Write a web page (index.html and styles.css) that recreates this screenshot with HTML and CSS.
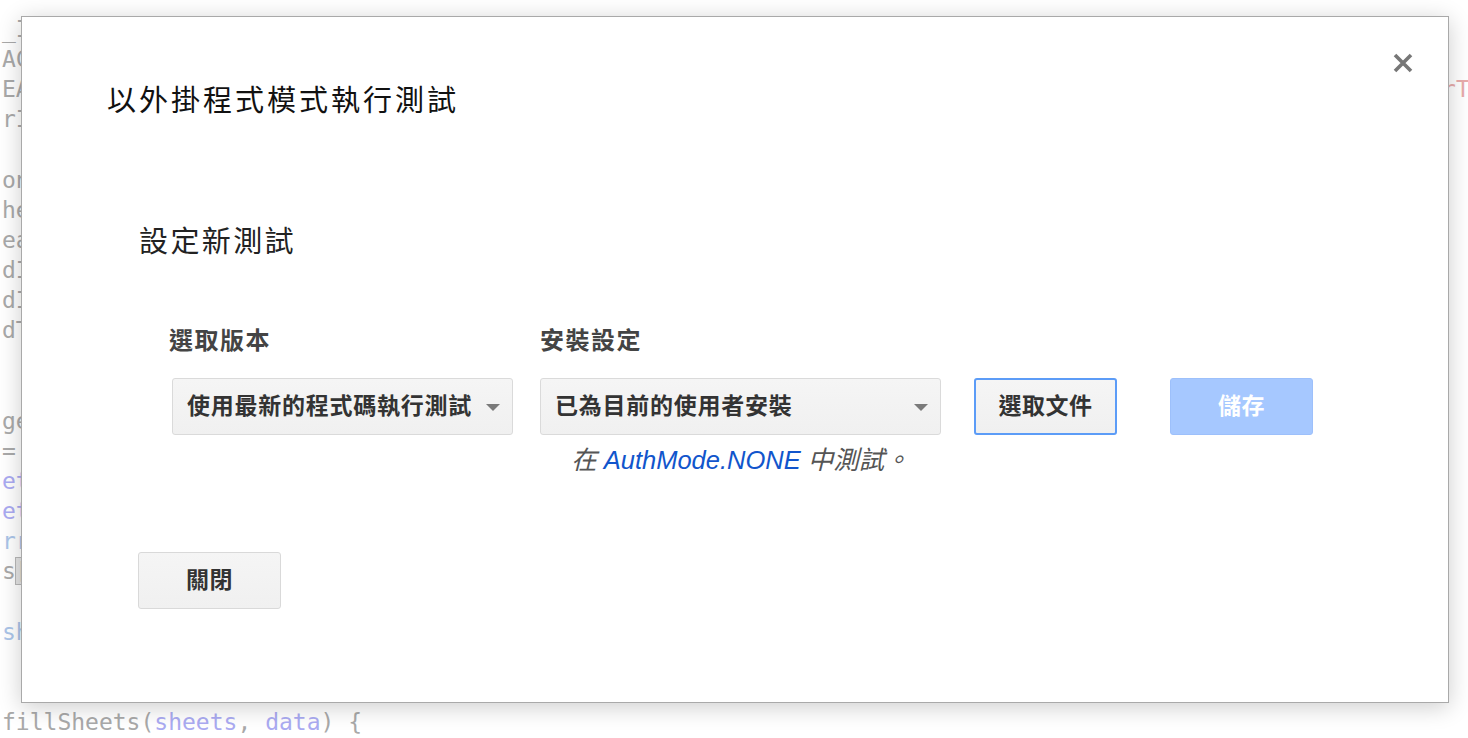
FILE: index.html
```html
<!DOCTYPE html>
<html lang="zh-Hant">
<head>
<meta charset="utf-8">
<title>以外掛程式模式執行測試</title>
<link rel="stylesheet" href="styles.css">
</head>
<body>
<pre class="code"><span class="c-plain">_ID</span>
<span class="c-plain">ACT</span>
<span class="c-plain">EAD</span><span class="c-str c-tail">'OrderTotal';</span>
<span class="c-plain">rId</span>

<span class="c-plain">onO</span>
<span class="c-plain">hee</span>
<span class="c-plain">ead</span>
<span class="c-plain">dIn</span>
<span class="c-plain">dIn</span>
<span class="c-plain">dTo</span>


<span class="c-plain">get</span>
<span class="c-plain">= s</span>
<span class="c-var">etV</span>
<span class="c-var">etR</span>
<span class="c-def">rr.</span>
<span class="c-plain">s<span class="c-match">[</span>i</span>

<span class="c-def">she</span>


<span class="c-plain">fillSheets(</span><span class="c-var">sheets</span><span class="c-plain">, </span><span class="c-var">data</span><span class="c-plain">) {</span></pre>

<div class="dialog" role="dialog" aria-labelledby="dlg-title">
  <button class="dialog-close" aria-label="關閉">
    <svg width="22" height="22" viewBox="0 0 22 22" aria-hidden="true">
      <path d="M3 3 L19 19 M19 3 L3 19" stroke="#777" stroke-width="3.6" stroke-linecap="butt" fill="none"/>
    </svg>
  </button>
  <h1 class="dialog-title" id="dlg-title">以外掛程式模式執行測試</h1>

  <section class="dialog-body">
    <h2 class="section-title">設定新測試</h2>

    <div class="fields">
      <div class="field field-version">
        <label class="field-label">選取版本</label>
        <div class="select select-version">
          <span class="select-text">使用最新的程式碼執行測試</span>
          <span class="select-arrow"></span>
        </div>
      </div>
      <div class="field field-install">
        <label class="field-label">安裝設定</label>
        <div class="select select-install">
          <span class="select-text">已為目前的使用者安裝</span>
          <span class="select-arrow"></span>
        </div>
        <p class="hint">在 <span class="hint-mode">AuthMode.NONE</span> 中測試。</p>
      </div>
      <div class="actions">
        <button class="btn btn-focus">選取文件</button>
        <button class="btn btn-primary" disabled>儲存</button>
      </div>
    </div>

    <div class="footer">
      <button class="btn">關閉</button>
    </div>
  </section>
</div>
</body>
</html>
```
FILE: styles.css
```css
html, body {
  margin: 0;
  padding: 0;
  background: #fff;
  overflow: hidden;
  width: 1468px;
  height: 738px;
}

.code {
  margin: 0;
  padding: 14px 0 0 2px;
  width: 1466px;
  height: 724px;
  overflow: hidden;
  font-family: "DejaVu Sans Mono", "Liberation Mono", monospace;
  font-size: 23px;
  line-height: 30.13px;
  color: #a9a9a9;
  white-space: pre;
}

.c-plain { color: #a9a9a9; }
.c-var { color: #ababf2; }
.c-def { color: #abc5e9; }
.c-str { color: #e8acac; }
.c-tail { margin-left: 96ch; }
.c-match {
  background: #e4e4e4;
  outline: 1px solid #b8b8b8;
}

.dialog {
  position: absolute;
  left: 21px;
  top: 16px;
  width: 1428px;
  height: 687px;
  box-sizing: border-box;
  background: #fff;
  border: 1px solid #a9a9a9;
  box-shadow: 0 4px 22px rgba(0, 0, 0, 0.2);
  font-family: "Liberation Sans", "Noto Sans CJK TC", sans-serif;
  color: #222;
}

.dialog-close {
  position: absolute;
  top: 35px;
  right: 34px;
  width: 22px;
  height: 22px;
  padding: 0;
  border: 0;
  background: transparent;
  display: block;
}

.dialog-close svg { display: block; }

.dialog-title {
  margin: 68px 0 0 85px;
  font-size: 29px;
  line-height: 32px;
  font-weight: normal;
  letter-spacing: 3px;
  color: #111;
}

.dialog-body {
  padding-left: 117px;
}

.section-title {
  margin: 107px 0 0 0;
  font-size: 29px;
  line-height: 36px;
  font-weight: normal;
  letter-spacing: 2.4px;
  color: #222;
}

.fields {
  display: flex;
  align-items: flex-start;
  margin: 66px 0 0 33px;
}

.field {
  display: flex;
  flex-direction: column;
}

.field-version { width: 341px; }
.field-version .field-label { margin-left: -3px; }

.field-install {
  width: 401px;
  margin-left: 27px;
}

.field-label {
  display: block;
  font-size: 24px;
  line-height: 30px;
  font-weight: bold;
  letter-spacing: 1.5px;
  color: #444;
  margin-bottom: 22px;
}

.select {
  height: 57px;
  box-sizing: border-box;
  border: 1px solid #dadada;
  border-radius: 3px;
  background: linear-gradient(#f5f5f5, #f0f0f0);
  display: flex;
  align-items: center;
  padding: 0 12px 6px 14px;
}

.select-text {
  flex: 1;
  font-size: 23px;
  font-weight: bold;
  letter-spacing: 0.75px;
  color: #333;
  white-space: nowrap;
}

.select-arrow {
  width: 0;
  height: 0;
  border-left: 7.5px solid transparent;
  border-right: 7.5px solid transparent;
  border-top: 7px solid #7a7a7a;
  margin-top: 8px;
}

.hint {
  margin: 10px 0 0 0;
  font-size: 25.5px;
  line-height: 30px;
  font-style: italic;
  color: #555;
  text-align: center;
}

.hint-mode { color: #1155cc; }

.actions {
  display: flex;
  gap: 53px;
  margin: 52px 0 0 33px;
}

.btn {
  width: 143px;
  height: 57px;
  box-sizing: border-box;
  border: 1px solid #d9d9d9;
  border-radius: 3px;
  background: linear-gradient(#f5f5f5, #f0f0f0);
  font-family: "Liberation Sans", "Noto Sans CJK TC", sans-serif;
  font-size: 23px;
  font-weight: bold;
  letter-spacing: 0.5px;
  color: #333;
  padding: 0 0 6px 0;
  display: flex;
  align-items: center;
  justify-content: center;
}

.btn-focus {
  border: 2px solid #5c9cf7;
}

.btn-primary {
  background: #a6c8ff;
  border: 1px solid #9dc0fb;
  color: #fff;
}

.footer {
  margin: 77px 0 0 -1px;
}
```
